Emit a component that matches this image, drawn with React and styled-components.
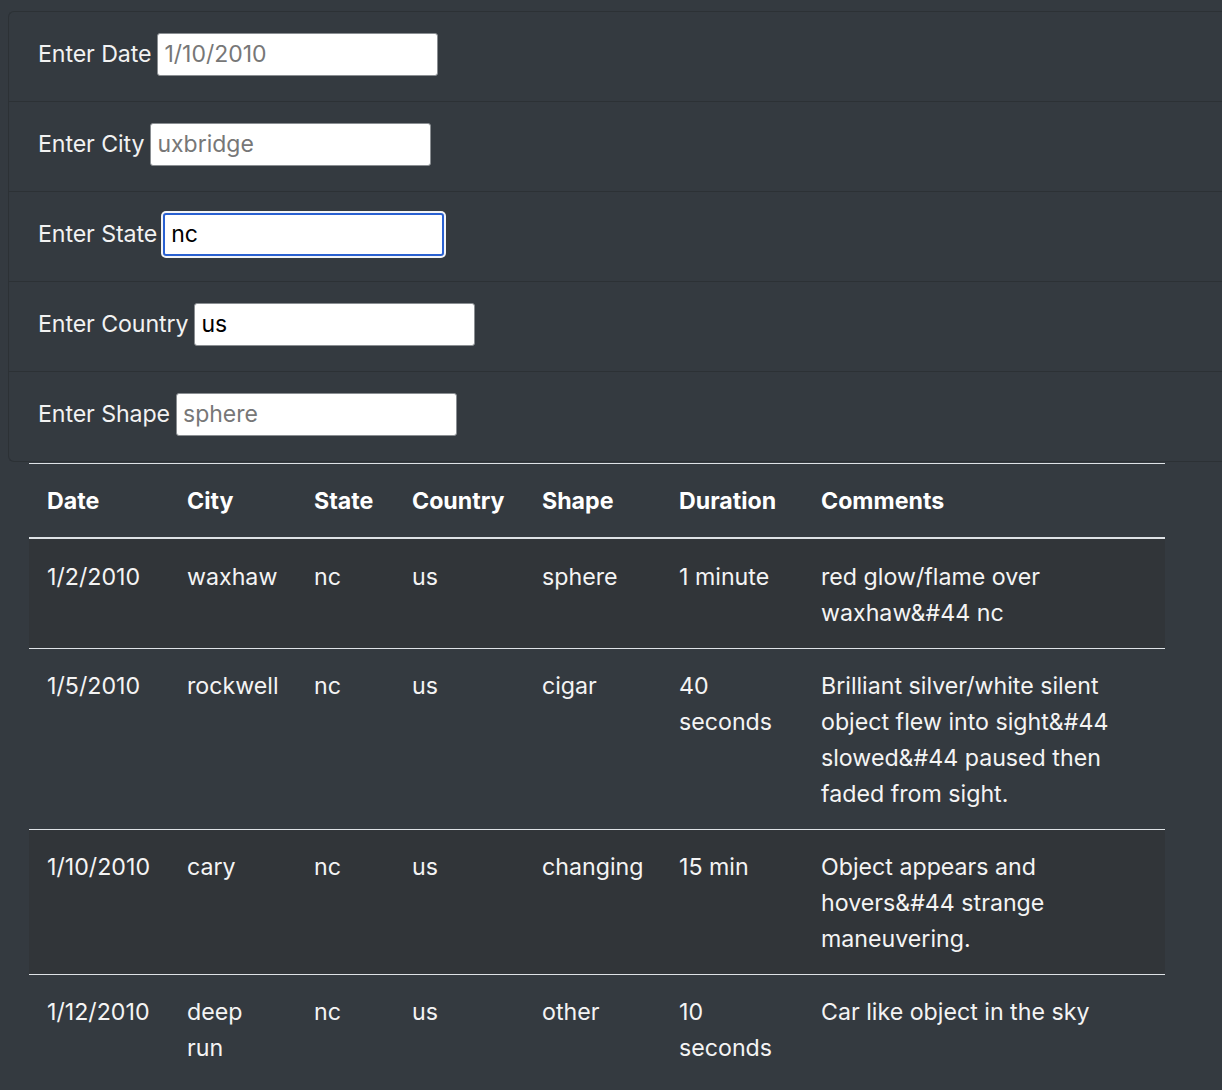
import React from "react";
import styled, { createGlobalStyle } from "styled-components";

const Global = createGlobalStyle`
  html { background: #343a40; }
  body {
    margin: 8px 0 8px 8px;
    background: #343a40;
    font-family: Inter, "Noto Sans", sans-serif;
    color: #fff;
  }
`;

const Page = styled.div`
  display: flex;
  flex-direction: column;
  align-items: stretch;
  padding-top: 3px;
`;

const FilterList = styled.ul`
  list-style: none;
  margin: 0 0 1px 0;
  padding: 0;
  border: 1px solid #2c3135;
  border-right: none;
  border-radius: 6px 0 0 6px;
  background: #343a40;
`;

const FilterItem = styled.li`
  display: flex;
  align-items: center;
  gap: 6px;
  height: ${(p) => (p.$first ? "89px" : "90px")};
  padding: 0 29px 5px;
  box-sizing: border-box;
  border-top: ${(p) => (p.$first ? "none" : "1px solid #2c3135")};
`;

const Label = styled.label`
  font-size: 23.2px;
  color: #f2f2f2;
  letter-spacing: -0.1px;
`;

const Input = styled.input`
  width: 281px;
  height: 43px;
  box-sizing: border-box;
  font-family: Inter, "Noto Sans", sans-serif;
  font-size: 23px;
  padding: 0 6px;
  border: ${(p) => (p.$focused ? "2px solid #2a61d1" : "1px solid #8a8e92")};
  border-radius: 3px;
  background: #fff;
  color: #000;
  outline: none;
  box-shadow: ${(p) => (p.$focused ? "0 0 0 2px #f4f5f7" : "none")};
  &::placeholder { color: #777; }
`;

const Table = styled.table`
  margin-left: 21px;
  width: 1136px;
  border-collapse: collapse;
  table-layout: fixed;
  font-size: 23.2px;
  line-height: 36px;
`;

const Th = styled.th`
  text-align: left;
  font-weight: 700;
  color: #fff;
  padding: 19px 18px 18px;
  border-top: 1px solid #dee2e6;
  border-bottom: 2px solid #dee2e6;
  vertical-align: bottom;
`;

const Tr = styled.tr`
  background: ${(p) => (p.$odd ? "#313539" : "transparent")};
`;

const Td = styled.td`
  padding: ${(p) => (p.$firstRow ? "20px" : "19px")} 18px 17px;
  color: #f4f4f4;
  border-top: 1px solid #dee2e6;
  vertical-align: top;
  white-space: normal;
`;

const cols = [140, 127, 98, 130, 137, 142, 362];
const headers = ["Date", "City", "State", "Country", "Shape", "Duration", "Comments"];

const rows = [
  ["1/2/2010", "waxhaw", "nc", "us", "sphere", "1 minute", "red glow/flame over waxhaw&#44 nc"],
  ["1/5/2010", "rockwell", "nc", "us", "cigar", "40 seconds", "Brilliant silver/white silent object flew into sight&#44 slowed&#44 paused then faded from sight."],
  ["1/10/2010", "cary", "nc", "us", "changing", "15 min", "Object appears and hovers&#44 strange maneuvering."],
  ["1/12/2010", "deep run", "nc", "us", "other", "10 seconds", "Car like object in the sky"],
];

const filters = [
  { label: "Enter Date", placeholder: "1/10/2010" },
  { label: "Enter City", placeholder: "uxbridge" },
  { label: "Enter State", value: "nc", focused: true },
  { label: "Enter Country", value: "us" },
  { label: "Enter Shape", placeholder: "sphere" },
];

export default function App() {
  return (
    <>
      <Global />
      <Page>
        <FilterList>
          {filters.map((f, i) => (
            <FilterItem key={f.label} $first={i === 0}>
              <Label>{f.label}</Label>
              <Input
                $focused={f.focused}
                placeholder={f.placeholder}
                value={f.value ?? ""}
                readOnly
              />
            </FilterItem>
          ))}
        </FilterList>
        <Table>
          <colgroup>
            {cols.map((w, i) => (
              <col key={i} style={{ width: w }} />
            ))}
          </colgroup>
          <thead>
            <tr>
              {headers.map((h) => (
                <Th key={h}>{h}</Th>
              ))}
            </tr>
          </thead>
          <tbody>
            {rows.map((r, i) => (
              <Tr key={i} $odd={i % 2 === 0}>
                {r.map((c, j) => (
                  <Td key={j} $firstRow={i === 0}>{c}</Td>
                ))}
              </Tr>
            ))}
          </tbody>
        </Table>
      </Page>
    </>
  );
}
